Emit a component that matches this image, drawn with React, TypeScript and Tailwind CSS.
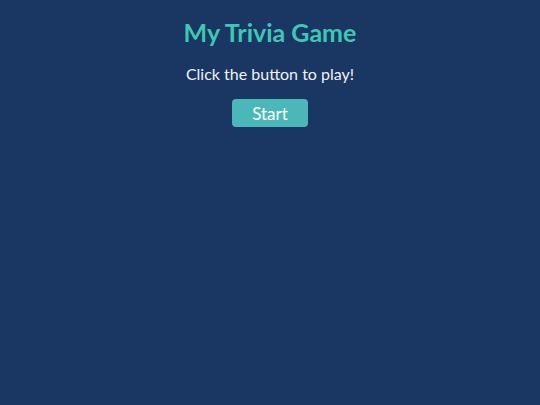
import React from 'react';

export default function App() {
    return (
        <div className="min-h-[405px] w-full bg-[#1a3663] flex flex-col items-center pt-[17px] text-center" style={{ fontFamily: 'Lato, "Noto Sans", sans-serif' }}>
            <h1 className="text-[25px] font-bold leading-[30px] text-[#3cc8b4]">My Trivia Game</h1>
            <p className="mt-[18px] text-[16px] leading-[18px] text-[#f0f2f7]">Click the button to play!</p>
            <button className="mt-[16px] w-[76px] h-[28px] rounded bg-[#4ab8b8] text-white text-[17px] leading-none">
                Start
            </button>
        </div>
    );
}
